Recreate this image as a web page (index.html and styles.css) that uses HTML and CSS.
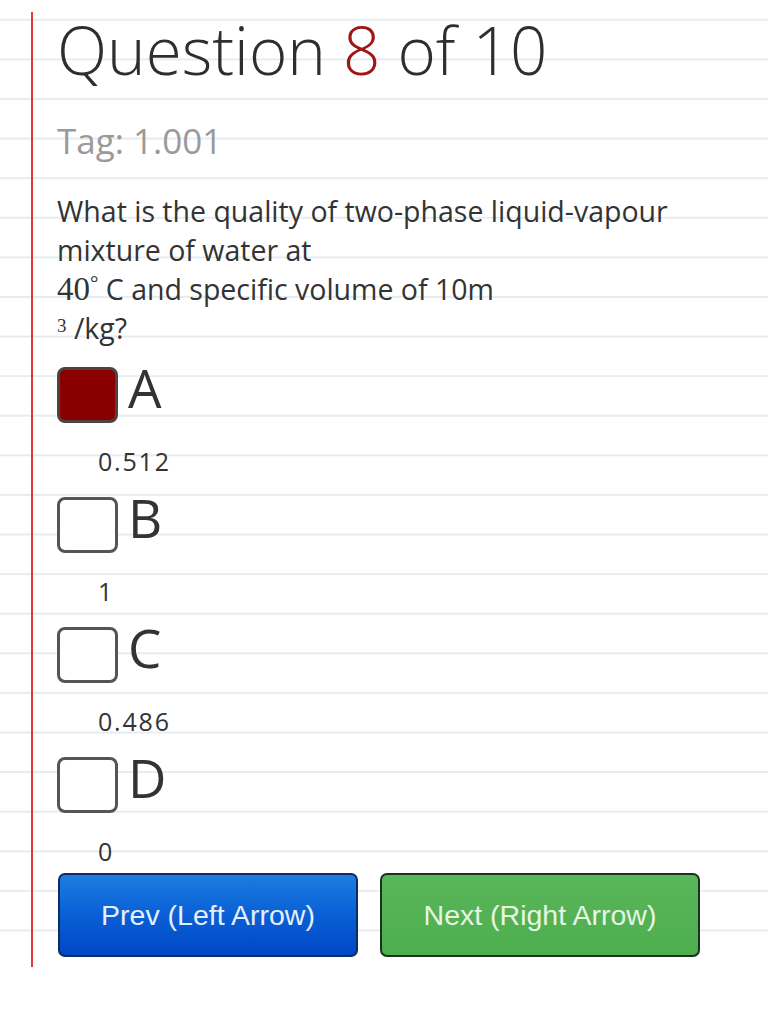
FILE: index.html
```html
<!DOCTYPE html>
<html lang="en">
<head>
<meta charset="utf-8">
<title>Question 8 of 10</title>
<link rel="stylesheet" href="styles.css">
</head>
<body>
<div class="paper">
  <div class="sheet">
    <h1 class="title">Question <span class="num">8</span> of 10</h1>
    <div class="tag">Tag: 1.001</div>
    <p class="question">What is the quality of two-phase liquid-vapour<br>mixture of water at<br><span class="math">40<sup class="deg">°</sup></span> C and specific volume of 10m<br><span class="math"><sup class="pow">3</sup></span> /kg?</p>
    <ul class="options">
      <li class="option">
        <div class="choice"><span class="box checked"></span><span class="letter">A</span></div>
        <div class="answer">0.512</div>
      </li>
      <li class="option">
        <div class="choice"><span class="box"></span><span class="letter">B</span></div>
        <div class="answer">1</div>
      </li>
      <li class="option">
        <div class="choice"><span class="box"></span><span class="letter">C</span></div>
        <div class="answer">0.486</div>
      </li>
      <li class="option">
        <div class="choice"><span class="box"></span><span class="letter">D</span></div>
        <div class="answer">0</div>
      </li>
    </ul>
    <div class="nav">
      <button class="btn prev" type="button">Prev (Left Arrow)</button>
      <button class="btn next" type="button">Next (Right Arrow)</button>
    </div>
  </div>
</div>
</body>
</html>
```

FILE: styles.css
```css
html, body {
  margin: 0;
  padding: 0;
  background: #ffffff;
}

body {
  font-family: "Open Sans", "Noto Sans", sans-serif;
  color: #333333;
}

.paper {
  padding-top: 12px;
  background-image: linear-gradient(to bottom,
    transparent 0, transparent 18.6px,
    #e6edf2 18.6px, #e6edf2 20.6px,
    transparent 20.6px);
  background-size: 100% 39.6px;
  background-repeat: repeat-y;
}

.sheet {
  margin-left: 31px;
  border-left: 2px solid #e2373c;
  padding-left: 24px;
  padding-bottom: 10px;
}

.title {
  margin: 0;
  font-size: 65.5px;
  font-weight: 300;
  line-height: 76px;
  color: #2e2e2e;
}

.num {
  color: #9e1515;
}

.tag {
  margin-top: 33px;
  font-size: 35px;
  line-height: 40px;
  color: #9a9a9a;
}

.question {
  margin: 31px 0 0;
  font-size: 28.5px;
  line-height: 39px;
  color: #333333;
}

.math {
  font-family: "Liberation Serif", "DejaVu Serif", serif;
  font-size: 33px;
  line-height: 0;
}

.deg {
  font-size: 21px;
  vertical-align: 10px;
  line-height: 0;
}

.pow {
  font-size: 19px;
  vertical-align: 7px;
  line-height: 0;
}

.options {
  list-style: none;
  margin: 19px 0 0;
  padding: 0;
}

.option {
  margin-bottom: 16px;
}

.option:last-child {
  margin-bottom: 0;
}

.choice {
  display: flex;
  align-items: flex-start;
  gap: 10px;
  height: 56px;
}

.box {
  box-sizing: border-box;
  width: 61px;
  height: 56px;
  border: 3px solid #555555;
  border-radius: 8px;
  background: #ffffff;
}

.box.checked {
  background: #8a0000;
  border-color: #4d4343;
}

.letter {
  font-size: 53px;
  line-height: 56px;
  margin-top: -7px;
  color: #333333;
}

.answer {
  margin-top: 18px;
  padding-left: 41px;
  font-size: 25px;
  line-height: 40px;
  letter-spacing: 1.8px;
  color: #333333;
}

.nav {
  display: flex;
  gap: 22px;
  margin-top: 2px;
  padding-left: 1px;
}

.btn {
  box-sizing: border-box;
  height: 84px;
  padding: 0;
  border-radius: 7px;
  font-family: "Liberation Sans", Arial, sans-serif;
  font-size: 28.5px;
  cursor: pointer;
}

.prev {
  width: 300px;
  border: 2px solid #0c2c66;
  background: linear-gradient(to bottom, #1c7ddf 0%, #0a5fd6 50%, #0048c6 100%);
  color: #e4f0fb;
}

.next {
  width: 320px;
  border: 2px solid #1d321d;
  background: linear-gradient(to bottom, #59b659 0%, #4eae4e 100%);
  color: #e6f5e4;
}
```
